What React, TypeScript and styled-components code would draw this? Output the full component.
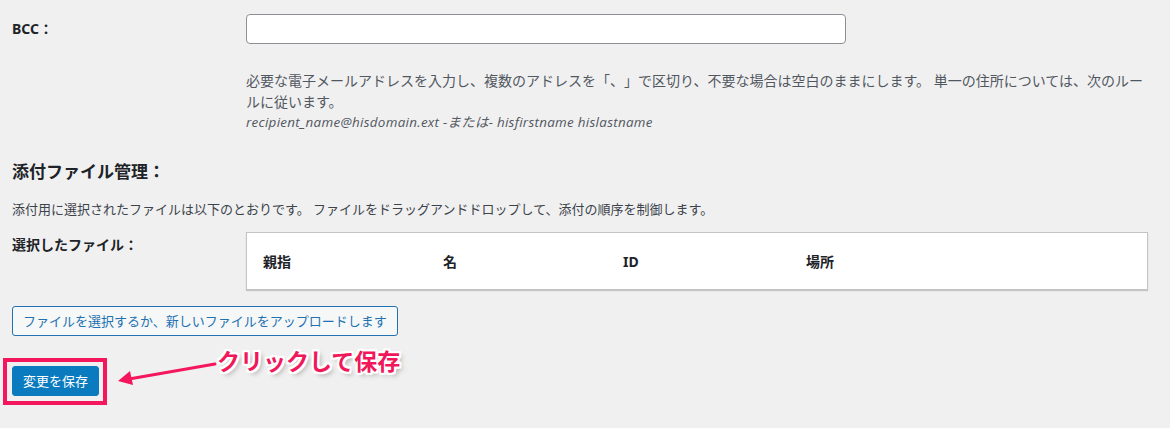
import * as React from "react";
import styled, { createGlobalStyle } from "styled-components";

const GlobalStyle = createGlobalStyle`
  html, body {
    margin: 0;
    padding: 0;
    background: #f0f0f1;
  }
  body {
    font-family: "Noto Sans", "Noto Sans CJK JP", sans-serif;
    color: #1d2327;
    text-spacing-trim: space-all;
  }
`;

const Page = styled.div`
  padding: 14px 12px 24px;
`;

const FormRow = styled.div<{ $top?: number }>`
  display: grid;
  grid-template-columns: 234px 1fr;
  margin-top: ${(p) => p.$top ?? 0}px;
`;

const Label = styled.div<{ $pad: number }>`
  padding-top: ${(p) => p.$pad}px;
  font-size: 14px;
  line-height: 20px;
  font-weight: 700;
  color: #1d2327;
`;

const Field = styled.div`
  display: flex;
  flex-direction: column;
  align-items: flex-start;
`;

const TextInput = styled.input`
  box-sizing: border-box;
  width: 600px;
  height: 30px;
  margin: 0;
  padding: 0 8px;
  border: 1px solid #8c8f94;
  border-radius: 4px;
  background: #fff;
  font-size: 14px;
  outline: none;
`;

const Description = styled.p`
  margin: 26px 0 0;
  max-width: 906px;
  font-size: 14px;
  line-height: 21px;
  color: #50575e;
  text-spacing-trim: space-all;
`;

const Example = styled.span`
  display: block;
  font-family: "Open Sans", "Noto Sans CJK JP", sans-serif;
  font-size: 13.4px;
  letter-spacing: 0.3px;
  line-height: 20px;
  font-style: italic;
  font-weight: 400;
  color: #50575e;
`;

const Heading = styled.h2`
  margin: 29px 0 0;
  font-size: 17px;
  line-height: 22px;
  font-weight: 700;
  color: #1d2327;
`;

const Intro = styled.p`
  margin: 16px 0 0;
  font-size: 13px;
  line-height: 20px;
  color: #3c434a;
`;

const FileTable = styled.div`
  box-sizing: border-box;
  width: 902px;
  height: 58px;
  display: grid;
  grid-template-columns: 180px 180px 183px 1fr;
  align-items: center;
  background: #fff;
  border: 1px solid #c3c4c7;
  box-shadow: 0 1px 1px rgba(0, 0, 0, 0.18);
`;

const HeadCell = styled.div`
  padding-left: 16px;
  font-size: 14px;
  font-weight: 700;
  color: #1d2327;
`;

const OutlineButton = styled.button`
  display: block;
  box-sizing: border-box;
  height: 30px;
  margin-top: 16px;
  padding: 0 10px;
  border: 1px solid #2271b1;
  border-radius: 3px;
  background: #f6f7f7;
  color: #2271b1;
  font-family: inherit;
  font-size: 13px;
  line-height: 28px;
  cursor: pointer;
`;

const SaveArea = styled.div`
  position: relative;
  display: inline-block;
  margin-top: 30px;
`;

const PrimaryButton = styled.button`
  display: block;
  box-sizing: border-box;
  height: 30px;
  padding: 0 10px;
  border: 1px solid #0a7bbf;
  border-radius: 3px;
  background: #0a7bbf;
  color: #fff;
  font-family: inherit;
  font-size: 13px;
  line-height: 28px;
  cursor: pointer;
`;

const Highlight = styled.div`
  position: absolute;
  left: -9px;
  top: -8px;
  right: -8px;
  bottom: -9px;
  border: 4px solid #f5175e;
  pointer-events: none;
`;

const Arrow = styled.svg`
  position: absolute;
  left: 103px;
  top: -8px;
`;

const Callout = styled.div`
  position: absolute;
  left: 205px;
  top: -19px;
  white-space: nowrap;
  font-size: 23px;
  line-height: 28px;
  font-weight: 700;
  color: #f0175b;
  text-shadow: 2px 0 0 #fff, -2px 0 0 #fff, 0 2px 0 #fff, 0 -2px 0 #fff,
    2px 2px 0 #fff, -2px -2px 0 #fff, 2px -2px 0 #fff, -2px 2px 0 #fff,
    3px 3px 5px rgba(0, 0, 0, 0.35);
`;

const columns = ["親指", "名", "ID", "場所"];

export default function App() {
  return (
    <Page>
      <GlobalStyle />
      <FormRow>
        <Label $pad={5}>BCC：</Label>
        <Field>
          <TextInput type="text" />
          <Description>
            必要な電子メールアドレスを入力し、複数のアドレスを「、」で区切り、不要な場合は空白のままにします。
            単一の住所については、次のルールに従います。
            <Example>recipient_name@hisdomain.ext -または- hisfirstname hislastname</Example>
          </Description>
        </Field>
      </FormRow>

      <Heading>添付ファイル管理：</Heading>
      <Intro>
        添付用に選択されたファイルは以下のとおりです。
        ファイルをドラッグアンドドロップして、添付の順序を制御します。
      </Intro>

      <FormRow $top={13}>
        <Label $pad={3}>選択したファイル：</Label>
        <FileTable>
          {columns.map((c) => (
            <HeadCell key={c}>{c}</HeadCell>
          ))}
        </FileTable>
      </FormRow>

      <OutlineButton type="button">
        ファイルを選択するか、新しいファイルをアップロードします
      </OutlineButton>

      <SaveArea>
        <PrimaryButton type="submit">変更を保存</PrimaryButton>
        <Highlight />
        <Arrow width="104" height="32" viewBox="0 0 104 32">
          <line x1="100" y1="6" x2="14" y2="21" stroke="#f5175e" strokeWidth="3" strokeLinecap="round" />
          <polygon points="3,23 18,27 15,13" fill="#f5175e" />
        </Arrow>
        <Callout>クリックして保存</Callout>
      </SaveArea>
    </Page>
  );
}
